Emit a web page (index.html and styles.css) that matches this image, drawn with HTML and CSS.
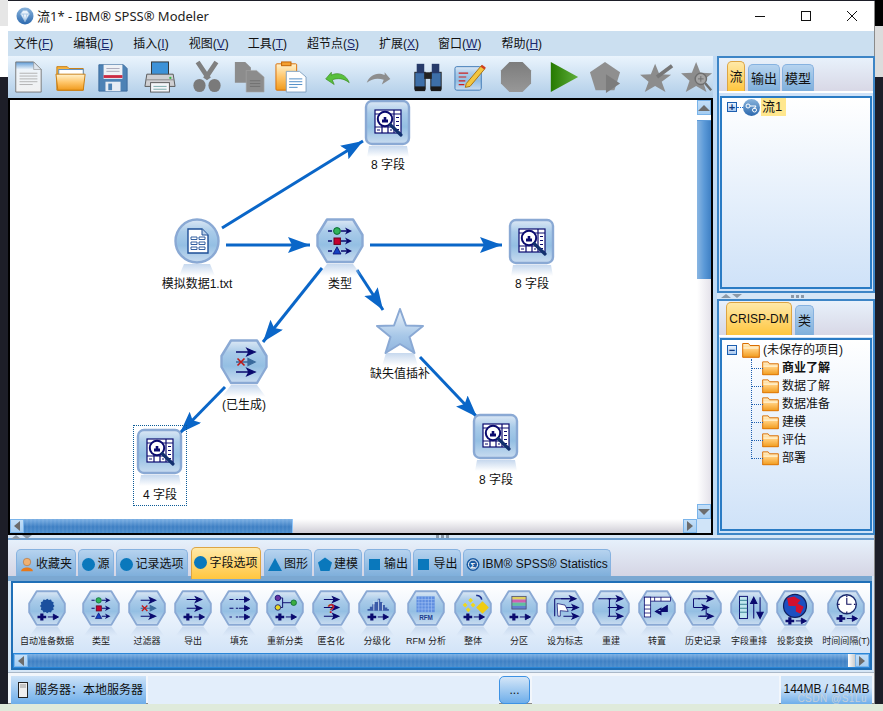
FILE: index.html
```html
<!DOCTYPE html>
<html lang="zh">
<head>
<meta charset="utf-8">
<title>IBM SPSS Modeler</title>
<link rel="stylesheet" href="styles.css">
</head>
<body>
<svg class="defs" aria-hidden="true">
  <defs>
    <linearGradient id="gBase" x1="0" y1="0" x2="0" y2="1"><stop offset="0" stop-color="#dce8f5"/><stop offset=".28" stop-color="#a9cbe9"/><stop offset=".6" stop-color="#94bfe3"/><stop offset="1" stop-color="#c9dcf0"/></linearGradient>
    <linearGradient id="gRefl" x1="0" y1="0" x2="0" y2="1"><stop offset="0" stop-color="#c6d8ee"/><stop offset="1" stop-color="#c6d8ee" stop-opacity="0"/></linearGradient>
    <linearGradient id="gStar" x1="0" y1="0" x2="0" y2="1"><stop offset="0" stop-color="#eef4fb"/><stop offset=".6" stop-color="#a8c8e8"/><stop offset="1" stop-color="#8fb4de"/></linearGradient>
    <linearGradient id="gFold" x1="0" y1="0" x2="0" y2="1"><stop offset="0" stop-color="#fff3cf"/><stop offset=".5" stop-color="#ffc66b"/><stop offset="1" stop-color="#f09a1c"/></linearGradient>
    <linearGradient id="gDoc" x1="0" y1="0" x2="0" y2="1"><stop offset="0" stop-color="#5d9ad6"/><stop offset=".25" stop-color="#eef4fa"/><stop offset="1" stop-color="#f1f1f1"/></linearGradient>
    <linearGradient id="gGray" x1="0" y1="0" x2="0" y2="1"><stop offset="0" stop-color="#7c7c7c"/><stop offset="1" stop-color="#989898"/></linearGradient>
    <linearGradient id="gPlay" x1="0" y1="0" x2="1" y2="0"><stop offset="0" stop-color="#267a00"/><stop offset="1" stop-color="#5fae3c"/></linearGradient>
    <linearGradient id="gBall" x1="0" y1="0" x2="0" y2="1"><stop offset="0" stop-color="#8ab4dc"/><stop offset="1" stop-color="#2a68ae"/></linearGradient>
    <marker id="head" markerUnits="userSpaceOnUse" markerWidth="24" markerHeight="18" refX="22" refY="8" orient="auto"><path d="M0 0L22 8L0 16L4 8Z" fill="#0a66c8"/></marker>

    <path id="ar" d="M0 0H17M11 -3.500L19 0L11 3.500L13 0Z" stroke="#0a0a6e" stroke-width="1.300" fill="#0a0a6e"/>
    <path id="ars" d="M0 0H11M7 -3.500L13.500 0L7 3.500Z" stroke="#0a0a6e" stroke-width="1.200" fill="#0a0a6e"/>
    <path id="pa" d="M0 -4.500H4V-1.600H7.500V1.600H4V4.500H0V1.600H-3.500V-1.600H0Z" fill="#0a0a6e"/>
    <g id="plusar"><use href="#pa" x="15.500" y="34"/><use href="#ars" x="25" y="34"/></g>

    <symbol id="b-hex" viewBox="0 0 48 58"><path d="M11 46H37L46 58H2Z" fill="url(#gRefl)"/><path d="M11 1.500H37L46.500 17V28L37 44H11L1.500 28V17Z" fill="url(#gBase)" stroke="#8aa9d4" stroke-width="2.400" stroke-linejoin="round"/></symbol>
    <symbol id="b-round" viewBox="0 0 48 58"><path d="M5 47H43L45 58H3Z" fill="url(#gRefl)"/><rect x="2" y="2" width="43" height="43" rx="6" fill="url(#gBase)" stroke="#8aa9d4" stroke-width="2.400"/></symbol>
    <symbol id="b-circle" viewBox="0 0 48 58"><path d="M11 46H37L42 58H6Z" fill="url(#gRefl)"/><circle cx="24" cy="23" r="21.500" fill="url(#gBase)" stroke="#8aa9d4" stroke-width="2.400"/></symbol>
    <symbol id="b-star" viewBox="0 0 48 58"><path d="M10 45H38L42 58H6Z" fill="url(#gRefl)"/><path d="M24 1L30 17.500L47 18L33.500 29L38.500 45L24 36L9.500 45L14.500 29L1 18L18 17.500Z" fill="url(#gStar)" stroke="#8aa9d4" stroke-width="2" stroke-linejoin="round"/></symbol>

    <symbol id="g-file" viewBox="0 0 48 58"><path d="M15 11H29L35 17V35H15Z" fill="#fff" stroke="#1e4f96" stroke-width="1.400"/><path d="M29 11V17H35" fill="#bcd2ea" stroke="#1e4f96"/><path d="M18 19h6v2.500h-6zM26 19h6v2.500h-6zM18 24h6v2.500h-6zM26 24h6v2.500h-6zM18 29h6v2.500h-6zM26 29h6v2.500h-6z" fill="none" stroke="#1e4f96" stroke-width=".9"/></symbol>
    <symbol id="g-type" viewBox="0 0 48 58"><path d="M12 13h4M12 23h4M12 33h4" stroke="#0a0a6e" stroke-width="1.300"/><circle cx="21" cy="13" r="3.400" fill="#2fb35a" stroke="#0a6a30"/><rect x="18" y="20" width="6.400" height="6.400" fill="#c4002f" stroke="#6a0020"/><path d="M21 28.800L25 36H17Z" fill="#1440c0" stroke="#0a0a6e" stroke-width=".8"/><path d="M25 13h8M25 23h8M25 33h8" stroke="#0a0a6e" stroke-width="1.300"/><path d="M29 9.500L36 13L29 16.500L31 13ZM29 19.500L36 23L29 26.500L31 23ZM29 29.500L36 33L29 36.500L31 33Z" fill="#0a0a6e"/></symbol>
    <symbol id="g-filter" viewBox="0 0 48 58"><use href="#ar" x="16" y="13"/><use href="#ar" x="16" y="33"/><path d="M16 23H33M28 19.500L35 23L28 26.500Z" stroke="#3a6a9c" stroke-width="1.300" fill="#3a6a9c"/><path d="M17.500 19.500L24.500 26.500M24.500 19.500L17.500 26.500" stroke="#c01818" stroke-width="1.600"/></symbol>
    <symbol id="g-table" viewBox="0 0 48 58"><rect x="11" y="11" width="26" height="23" fill="#fff" stroke="#0a0a6e" stroke-width="1.200"/><path d="M11 15H37M30 11V34M24 26V34M18 26V34M11 28H30" stroke="#0a0a6e" stroke-width="1.200"/><path d="M32 18.500h3M32 22.500h3M32 26.500h3M32 30.500h3M13 31h3M26 31h2" stroke="#0a0a6e"/><circle cx="21" cy="20" r="7.200" fill="#fff" stroke="#0a0a6e" stroke-width="2"/><path d="M18 23.500V20.500H19.700V18H22.300V20.500H24V23.500Z" fill="#0a0a6e"/><path d="M26 25.500L37 36" stroke="#12306e" stroke-width="3.200" stroke-linecap="round"/></symbol>

    <symbol id="p1" viewBox="0 0 48 58"><path transform="translate(8 5.500) scale(.68)" d="M24 8L27 10.500L31 9.500L32.500 13L36 14.500L35 18.500L37.500 21.500L35 24.500L36 28.500L32.500 30L31 33.500L27 32.500L24 35L21 32.500L17 33.500L15.500 30L12 28.500L13 24.500L10.500 21.500L13 18.500L12 14.500L15.500 13L17 9.500L21 10.500Z" fill="#1b4f9e"/><use href="#plusar"/></symbol>
    <symbol id="p4" viewBox="0 0 48 58"><use href="#ar" x="16" y="12"/><use href="#ar" x="16" y="23"/><use href="#plusar"/></symbol>
    <symbol id="p5" viewBox="0 0 48 58"><path d="M12 12h5M20 12h3M12 23h5M20 23h3M12 34h3M20 34h3" stroke="#0a0a6e" stroke-width="1.400"/><use href="#ars" x="24" y="12"/><use href="#ars" x="24" y="23"/><use href="#ars" x="24" y="34"/></symbol>
    <symbol id="p6" viewBox="0 0 48 58"><path d="M15 10H21V22H15M21 16H33" stroke="#0a0a6e" fill="none" stroke-width="1.200"/><circle cx="15" cy="10" r="3.500" fill="#6633a0" stroke="#0a0a6e"/><circle cx="15" cy="22" r="3.500" fill="#e8d820" stroke="#0a0a6e"/><circle cx="35" cy="16" r="3.500" fill="#3cac40" stroke="#0a6a30"/><use href="#plusar"/></symbol>
    <symbol id="p7" viewBox="0 0 48 58"><use href="#ar" x="15" y="12"/><use href="#ar" x="15" y="22"/><use href="#ar" x="15" y="33"/><text x="24" y="29" class="qm">?</text></symbol>
    <symbol id="p8" viewBox="0 0 48 58"><path d="M10 26h2v-2h3v-3h3v-3h3v-3h4v-4h3v4h3v4h3v3h3v2h2v2H10Z" fill="#3a5aa8"/><path d="M20 14v12M26 12v14M31 16v10" stroke="#dce8f5"/><use href="#plusar"/></symbol>
    <symbol id="p9" viewBox="0 0 48 58"><rect x="12" y="8" width="23" height="20" fill="#5f8ee0"/><path d="M15 8v20M19 8v20M23 8v20M27 8v20M31 8v20M12 12h23M12 16h23M12 20h23M12 24h23" stroke="#a7c6f5" stroke-width=".7"/><text x="24" y="38" class="rfm">RFM</text></symbol>
    <symbol id="p10" viewBox="0 0 48 58"><path d="M18 13l3-3 3 3-3 3zM11 19l3-3 3 3-3 3zM21 19l3-3 3 3-3 3zM15 25l3-3 3 3-3 3z" fill="#f0d818"/><path d="M36 14l8 8-8 8-8-8z" fill="#f0cc10"/><path d="M28 7a6 6 0 0 1 7 5" stroke="#1b2f8e" stroke-width="2" fill="none"/><use href="#plusar"/></symbol>
    <symbol id="p11" viewBox="0 0 48 58"><rect x="15" y="8" width="18" height="4" fill="#e0d060"/><rect x="15" y="12" width="18" height="4" fill="#d060b0"/><rect x="15" y="16" width="18" height="4" fill="#60c0a0"/><rect x="15" y="20" width="18" height="4" fill="#6080d0"/><rect x="15" y="8" width="18" height="16" fill="none" stroke="#4a4a70"/><use href="#plusar"/></symbol>
    <symbol id="p12" viewBox="0 0 48 58"><path d="M11 11H30M11 11V33" stroke="#0a0a6e" stroke-width="1.300"/><use href="#ar" x="19" y="11"/><use href="#ar" x="22" y="22"/><use href="#ar" x="22" y="33"/><path d="M14 17L24 19L28 27L18 26V33H15Z" fill="#fff" stroke="#0a0a6e" stroke-width=".9"/></symbol>
    <symbol id="p13" viewBox="0 0 48 58"><path d="M8 11H24M22 11V33" stroke="#0a0a6e" stroke-width="1.300"/><use href="#ar" x="20" y="11"/><use href="#ar" x="20" y="22"/><use href="#ar" x="20" y="33"/></symbol>
    <symbol id="p14" viewBox="0 0 48 58"><rect x="8" y="9" width="33" height="5" fill="#fff" stroke="#0a0a6e"/><rect x="8" y="9" width="8" height="25" fill="#fff" stroke="#0a0a6e"/><path d="M21 9v5M29 9v5M8 19h8M8 24h8M8 29h8" stroke="#0a0a6e"/><path d="M37 19V27H24M29 23L22 27L29 31Z" stroke="#0a0a6e" stroke-width="1.300" fill="#0a0a6e"/></symbol>
    <symbol id="p15" viewBox="0 0 48 58"><use href="#ar" x="18" y="11"/><use href="#ar" x="12" y="22"/><use href="#ar" x="18" y="33"/><path d="M12 11H20M12 11V22M28 22V33H20" stroke="#0a0a6e" fill="none" stroke-width="1.200"/></symbol>
    <symbol id="p16" viewBox="0 0 48 58"><rect x="12" y="8" width="10" height="28" fill="#bfe6ee" stroke="#0a0a6e" stroke-width="1.200"/><path d="M12 13h10M12 18h10M12 23h10M12 28h10" stroke="#1a6a80"/><path d="M30 36V12M26 17L30 9L34 17ZM38 9V33M34 28L38 36L42 28Z" stroke="#0a0a6e" fill="#0a0a6e" stroke-width="1.300"/></symbol>
    <symbol id="p17" viewBox="0 0 48 58"><circle cx="24" cy="20" r="14.500" fill="#1c4fc0" stroke="#10205e" stroke-width="1.500"/><path d="M14 10L23 8L31 13L27 17L35 21L31 30L25 27L25 20L16 20Z" fill="#d01030"/><use href="#plusar" y="5"/></symbol>
    <symbol id="p18" viewBox="0 0 48 58"><circle cx="25" cy="18" r="12" fill="#fff" stroke="#1a2a6e" stroke-width="1.800"/><path d="M25 10v8h6" stroke="#10105e" stroke-width="1.400" fill="none"/><path d="M25 7v2M25 27v2M14 18h2M34 18h2" stroke="#10105e" stroke-width="1.500"/><use href="#plusar" y="2"/></symbol>

    <symbol id="folder" viewBox="0 0 18 16"><path d="M.7 15.300V1.500H6.500L8 3.500H17.300V15.300Z" fill="url(#gFold)" stroke="#d96c00"/><path d="M1.500 6H16.500" stroke="#fff4d8" stroke-width="1.200"/></symbol>
  </defs>
</svg>

<div class="win">
  <header class="title">
    <svg class="appicon" viewBox="0 0 18 18"><circle cx="9" cy="9" r="8.500" fill="url(#gBall)"/><path d="M4.500 7L7 3.500H11L13.500 7L9 14.500Z" fill="#eaf3fb" stroke="#a5c5e2" stroke-width=".6"/><path d="M4.500 7H13.500M7 7L9 14.500L11 7" stroke="#8ab4dc" fill="none" stroke-width=".6"/></svg>
    <span class="title-text">流1* - IBM® SPSS® Modeler</span>
    <div class="winctl">
      <svg viewBox="0 0 12 12"><path d="M1 6.500H11" stroke="#111" fill="none"/></svg>
      <svg viewBox="0 0 12 12"><rect x="1.500" y="1.500" width="9" height="9" stroke="#111" fill="none"/></svg>
      <svg viewBox="0 0 12 12"><path d="M1 1L11 11M11 1L1 11" stroke="#111" fill="none"/></svg>
    </div>
  </header>

  <nav class="menu">
    <span>文件(<u>F</u>)</span><span>编辑(<u>E</u>)</span><span>插入(<u>I</u>)</span><span>视图(<u>V</u>)</span><span>工具(<u>T</u>)</span><span>超节点(<u>S</u>)</span><span>扩展(<u>X</u>)</span><span>窗口(<u>W</u>)</span><span>帮助(<u>H</u>)</span>
  </nav>

  <div class="upper">
    <div class="leftcol">
      <div class="toolbar">
        <svg viewBox="0 0 34 34"><path d="M4 1H23L31 9V33H4Z" fill="url(#gDoc)" stroke="#777"/><path d="M23 1V9H31Z" fill="#dfe6ee" stroke="#888" stroke-width=".6"/><path d="M8 13H27M8 16H27M8 19H27M8 22H27M8 25H22" stroke="#b0b0b0"/></svg>
        <svg class="g9" viewBox="0 0 34 34"><path d="M2 31V6H13L15 8H30V31Z" fill="#f6b23c" stroke="#c87c10"/><rect x="4" y="9" width="26" height="10" fill="#fff" stroke="#5b8fc4"/><path d="M1 14H32L30 31H3Z" fill="url(#gFold)" stroke="#c87c10"/></svg>
        <svg class="g8" viewBox="0 0 34 34"><path d="M2 4H28L32 8V32H2Z" fill="#4d82b5" stroke="#3a6a9c"/><rect x="7" y="4" width="20" height="15" fill="#eef1f6"/><path d="M10 8H24M10 11H24" stroke="#a8a8b8"/><rect x="7" y="15" width="20" height="3" fill="#cc2a42"/><rect x="9" y="22" width="16" height="10" fill="#e8edf4"/><rect x="12" y="24" width="4" height="7" fill="#4d82b5"/></svg>
        <svg class="g13" viewBox="0 0 34 34"><rect x="8" y="1" width="18" height="14" fill="#3d92d8" stroke="#333"/><path d="M3 14H31L33 27H1Z" fill="#cfcfd2" stroke="#555"/><path d="M2 20H32" stroke="#888"/><rect x="7" y="23" width="20" height="10" fill="#f4f6f9" stroke="#555"/><path d="M10 27H24M10 30H24" stroke="#7aa"/><circle cx="28" cy="18" r="1.200" fill="#3cb44a"/></svg>
        <svg class="g13" viewBox="0 0 34 34"><path d="M7 1L19 19M27 1L15 19" stroke="#808080" stroke-width="5"/><ellipse cx="9" cy="26" rx="6.500" ry="7" fill="#7a7a7a"/><ellipse cx="25" cy="26" rx="6.500" ry="7" fill="#7a7a7a"/></svg>
        <svg class="g8" viewBox="0 0 34 34"><path d="M2 1H13L19 7V23H2Z" fill="#8c8c8c"/><path d="M14 10H25L33 17V33H14Z" fill="#8c8c8c" stroke="#a8a8a8" stroke-width=".6"/><path d="M18 21H29M18 24H29M18 27H29" stroke="#707070"/></svg>
        <svg class="g8" viewBox="0 0 34 34"><rect x="1" y="3" width="22" height="28" rx="1" fill="url(#gFold)" stroke="#d96c00"/><rect x="7" y="1" width="10" height="4" fill="#f4a030" stroke="#c06000"/><path d="M12 11H26L33 17V33H12Z" fill="#fff" stroke="#7fa0c0"/><path d="M15 19H29M15 22H29M15 25H29M15 28H24" stroke="#4a8ac4"/></svg>
        <svg class="g12" viewBox="0 0 34 34"><path d="M5 19L11 12V15C19 11 27 15 30 23C24 18 17 18 12 20L14 25Z" fill="#58c03c" stroke="#3a8a20" stroke-width=".7"/></svg>
        <svg class="g8" viewBox="0 0 34 34"><path transform="matrix(-1 0 0 1 34 0)" d="M5 19L11 12V15C19 11 27 15 30 23C24 18 17 18 12 20L14 25Z" fill="#8e8e8e"/></svg>
        <svg class="g15" viewBox="0 0 34 34"><rect x="3" y="12" width="11" height="18" fill="#3d6fa8" stroke="#222"/><rect x="20" y="12" width="11" height="18" fill="#3d6fa8" stroke="#222"/><rect x="5" y="3" width="8" height="10" fill="#263a6a"/><rect x="21" y="3" width="8" height="10" fill="#263a6a"/><rect x="13" y="12" width="8" height="7" fill="#222"/><rect x="3" y="27" width="11" height="5" fill="#1a1a1a"/><rect x="20" y="27" width="11" height="5" fill="#1a1a1a"/></svg>
        <svg class="g8" viewBox="0 0 34 34"><rect x="1" y="6" width="28" height="25" rx="2" fill="url(#gBase)" stroke="#3d78b4"/><path d="M5 13H15M5 17H13M5 21H12M5 25H11" stroke="#cc2020" stroke-width="1.300"/><path d="M13 24L29 5L33 8L17 27L12 28Z" fill="#f2c640" stroke="#a87010"/><path d="M29 5L33 8" stroke="#d04020" stroke-width="2.500"/></svg>
        <svg class="g12" viewBox="0 0 34 34"><path d="M10 1H24L33 10V24L24 33H10L1 24V10Z" fill="url(#gGray)"/></svg>
        <svg class="g14" viewBox="0 0 34 34"><path d="M3 1L32 17L3 33Z" fill="url(#gPlay)"/></svg>
        <svg class="g7" viewBox="0 0 34 34"><path d="M17 1L33 12L27 31H7L1 12Z" fill="#8f8f8f"/><path d="M18 14L33 24L18 34Z" fill="#7c7c7c"/></svg>
        <svg class="g18" viewBox="0 0 34 34"><path d="M15 3L19.500 14L32 14.500L22 22L26 33L15 26.500L4 33L8 22L-1 14.500L10.500 14Z" fill="#8c8c8c"/><path d="M17 17L33 5" stroke="#777" stroke-width="4"/></svg>
        <svg class="g7" viewBox="0 0 34 34"><path d="M15 1L19.500 12.500L32 13L22 21L26 33L15 26.500L4 33L8 21L-1 13L10.500 12.500Z" fill="#8c8c8c"/><circle cx="20" cy="19" r="6" fill="#a4a4a4" stroke="#6e6e6e" stroke-width="1.500"/><path d="M17 19H23M20 16V22" stroke="#6e6e6e"/><path d="M24.500 23.500L31 31" stroke="#6e6e6e" stroke-width="2.500"/></svg>
      </div>

      <div class="frame">
        <div class="canvas">
          <svg class="edges" viewBox="0 0 687 419" width="687" height="419">
            <path marker-end="url(#head)" d="M212 128L353 41"/>
            <path marker-end="url(#head)" d="M216 145H300"/>
            <path marker-end="url(#head)" d="M360 145H492"/>
            <path marker-end="url(#head)" d="M312 168L253 242"/>
            <path marker-end="url(#head)" d="M347 170L373 210"/>
            <path marker-end="url(#head)" d="M410 257L467 317"/>
            <path marker-end="url(#head)" d="M215 287L170 333"/>
          </svg>
          <div class="node n1"><svg viewBox="0 0 48 58"><use href="#b-round"/><use href="#g-table"/></svg><span>8 字段</span></div>
          <div class="node n2"><svg viewBox="0 0 48 58"><use href="#b-circle"/><use href="#g-file"/></svg><span>模拟数据1.txt</span></div>
          <div class="node n3"><svg viewBox="0 0 48 58"><use href="#b-hex"/><use href="#g-type"/></svg><span>类型</span></div>
          <div class="node n4"><svg viewBox="0 0 48 58"><use href="#b-round"/><use href="#g-table"/></svg><span>8 字段</span></div>
          <div class="node n5"><svg viewBox="0 0 48 58"><use href="#b-star"/></svg><span>缺失值插补</span></div>
          <div class="node n6"><svg viewBox="0 0 48 58"><use href="#b-hex"/><use href="#g-filter"/></svg><span>(已生成)</span></div>
          <div class="node n7"><svg viewBox="0 0 48 58"><use href="#b-round"/><use href="#g-table"/></svg><span>4 字段</span></div>
          <div class="node n8"><svg viewBox="0 0 48 58"><use href="#b-round"/><use href="#g-table"/></svg><span>8 字段</span></div>
        </div>
        <div class="vbar">
          <div class="sbtn"><i class="tri up"></i></div>
          <div class="vthumb"></div>
          <div class="vtrack"></div>
          <div class="sbtn"><i class="tri down"></i></div>
        </div>
        <div class="hbar">
          <div class="sbtn"><i class="tri left"></i></div>
          <div class="hthumb big"></div>
          <div class="htrack"></div>
          <div class="sbtn"><i class="tri right"></i></div>
        </div>
        <div class="corner"></div>
      </div>
    </div>

    <aside class="rightcol">
      <section class="panel p-top">
        <div class="ptabs">
          <span class="ptab on t-liu">流</span><span class="ptab">输出</span><span class="ptab">模型</span>
        </div>
        <div class="treebox">
          <div class="troot">
            <i class="tbox">+</i><i class="tdots"></i>
            <svg class="ball" viewBox="0 0 17 17"><circle cx="8.500" cy="8.500" r="8.500" fill="url(#gBall)"/><circle cx="5" cy="7" r="2" fill="none" stroke="#fff"/><path d="M7 7H13L11 10" stroke="#fff" fill="none"/><circle cx="11.500" cy="11" r="2" fill="none" stroke="#fff"/></svg>
            <span class="hl">流1</span>
          </div>
        </div>
      </section>
      <div class="hsplit"><i class="tri up small"></i><i class="tri down small"></i><b class="dots"></b></div>
      <section class="panel p-bot">
        <div class="ptabs tall">
          <span class="ptab on t-crisp">CRISP-DM</span><span class="ptab t-lei">类</span>
        </div>
        <div class="treebox">
          <div class="troot">
            <i class="tbox">−</i><i class="tgap"></i>
            <svg class="fold" viewBox="0 0 18 16"><use href="#folder"/></svg>
            <span>(未保存的项目)</span>
          </div>
          <ul class="tree">
            <li><svg class="fold" viewBox="0 0 18 16"><use href="#folder"/></svg><b>商业了解</b></li>
            <li><svg class="fold" viewBox="0 0 18 16"><use href="#folder"/></svg>数据了解</li>
            <li><svg class="fold" viewBox="0 0 18 16"><use href="#folder"/></svg>数据准备</li>
            <li><svg class="fold" viewBox="0 0 18 16"><use href="#folder"/></svg>建模</li>
            <li><svg class="fold" viewBox="0 0 18 16"><use href="#folder"/></svg>评估</li>
            <li><svg class="fold" viewBox="0 0 18 16"><use href="#folder"/></svg>部署</li>
          </ul>
        </div>
      </section>
    </aside>
  </div>

  <section class="palette">
    <div class="psplit"><i class="tri up small"></i><i class="tri down small"></i><b class="dots"></b></div>
    <div class="tabs">
      <span class="tab w60"><svg viewBox="0 0 16 18"><circle cx="8" cy="6" r="4.500" fill="#f0b070" stroke="#a06030" stroke-width=".6"/><path d="M1 17C1 11 15 11 15 17Z" fill="#e87818"/></svg>收藏夹</span>
      <span class="tab w36"><i class="s-c"></i>源</span>
      <span class="tab w72"><i class="s-c"></i>记录选项</span>
      <span class="tab on w70"><i class="s-c"></i>字段选项</span>
      <span class="tab w48"><i class="s-t"></i>图形</span>
      <span class="tab w48"><svg viewBox="0 0 14 14"><path d="M7 0L14 5L11.500 13.500H2.500L0 5Z" fill="#0a78bc"/></svg>建模</span>
      <span class="tab w47"><i class="s-s"></i>输出</span>
      <span class="tab w48"><i class="s-s"></i>导出</span>
      <span class="tab w148"><svg viewBox="0 0 14 14"><circle cx="7" cy="7" r="6.500" fill="#1c5aa0"/><circle cx="7" cy="7" r="4.500" fill="none" stroke="#fff"/><text x="7" y="10" class="sig">Σ</text></svg>IBM® SPSS® Statistics</span>
    </div>
    <div class="strip"></div>
    <div class="pbox">
      <div class="items">
        <div class="item"><svg viewBox="0 0 48 58"><use href="#b-hex"/><use href="#p1"/></svg><span>自动准备数据</span></div>
        <div class="item m8"><svg viewBox="0 0 48 58"><use href="#b-hex"/><use href="#g-type"/></svg><span>类型</span></div>
        <div class="item"><svg viewBox="0 0 48 58"><use href="#b-hex"/><use href="#g-filter"/></svg><span>过滤器</span></div>
        <div class="item"><svg viewBox="0 0 48 58"><use href="#b-hex"/><use href="#p4"/></svg><span>导出</span></div>
        <div class="item"><svg viewBox="0 0 48 58"><use href="#b-hex"/><use href="#p5"/></svg><span>填充</span></div>
        <div class="item"><svg viewBox="0 0 48 58"><use href="#b-hex"/><use href="#p6"/></svg><span>重新分类</span></div>
        <div class="item"><svg viewBox="0 0 48 58"><use href="#b-hex"/><use href="#p7"/></svg><span>匿名化</span></div>
        <div class="item"><svg viewBox="0 0 48 58"><use href="#b-hex"/><use href="#p8"/></svg><span>分级化</span></div>
        <div class="item m3"><svg viewBox="0 0 48 58"><use href="#b-hex"/><use href="#p9"/></svg><span>RFM 分析</span></div>
        <div class="item m1"><svg viewBox="0 0 48 58"><use href="#b-hex"/><use href="#p10"/></svg><span>整体</span></div>
        <div class="item"><svg viewBox="0 0 48 58"><use href="#b-hex"/><use href="#p11"/></svg><span>分区</span></div>
        <div class="item"><svg viewBox="0 0 48 58"><use href="#b-hex"/><use href="#p12"/></svg><span>设为标志</span></div>
        <div class="item"><svg viewBox="0 0 48 58"><use href="#b-hex"/><use href="#p13"/></svg><span>重建</span></div>
        <div class="item"><svg viewBox="0 0 48 58"><use href="#b-hex"/><use href="#p14"/></svg><span>转置</span></div>
        <div class="item"><svg viewBox="0 0 48 58"><use href="#b-hex"/><use href="#p15"/></svg><span>历史记录</span></div>
        <div class="item"><svg viewBox="0 0 48 58"><use href="#b-hex"/><use href="#p16"/></svg><span>字段重排</span></div>
        <div class="item"><svg viewBox="0 0 48 58"><use href="#b-hex"/><use href="#p17"/></svg><span>投影变换</span></div>
        <div class="item m5"><svg viewBox="0 0 48 58"><use href="#b-hex"/><use href="#p18"/></svg><span>时间间隔(T)</span></div>
      </div>
      <div class="hbar pbar">
        <div class="sbtn"><i class="tri left"></i></div>
        <div class="hthumb"></div>
        <div class="stub"></div>
        <div class="sbtn"><i class="tri right"></i></div>
      </div>
    </div>
  </section>

  <footer class="status">
    <div class="cell srv"><svg viewBox="0 0 10 16"><rect x=".5" y=".5" width="9" height="15" fill="#eee" stroke="#222"/><path d="M2 3H8M2 5H8" stroke="#999"/></svg>服务器：本地服务器</div>
    <div class="cell c-wide"></div>
    <div class="cell more">...</div>
    <div class="cell c-wide2"></div>
    <div class="cell mem">144MB / 164MB</div>
  </footer>
  <span class="mark">CSDN @S1Lu</span>
</div>
</body>
</html>
```

FILE: styles.css
```css
* { box-sizing: border-box; }
html, body { margin: 0; padding: 0; }
body {
  width: 883px;
  height: 711px;
  overflow: hidden;
  position: relative;
  padding: 1px 0 0 8px;
  font: 12px/15px "Liberation Sans", "Noto Sans CJK SC", sans-serif;
  color: #111;
  background:
    linear-gradient(#dfeadb, #dfeadb) 0 100% / 100% 7px no-repeat,
    linear-gradient(#fff, #fff) 0 26px / 8px 51px no-repeat,
    linear-gradient(#e6e6e6, #e6e6e6) 0 0 / 8px 26px no-repeat,
    linear-gradient(#000, #000) 100% 0 / 8px 26px no-repeat,
    linear-gradient(#dcdcdc, #dcdcdc) 100% 26px / 8px 51px no-repeat,
    #1d1e28;
}
.defs { position: absolute; width: 0; height: 0; }
i { display: block; font-style: normal; }

.win {
  position: relative;
  width: 867px;
  height: 703px;
  display: flex;
  flex-direction: column;
  background: #d6e6f6;
  border-right: 1px solid #8a8a8a;
  border-bottom: 1px solid #8a8a8a;
}

/* title */
.title { height: 30px; background: #fff; display: flex; align-items: center; padding-left: 8px; flex: none; }
.appicon { width: 18px; height: 18px; margin-right: 3px; }
.title-text { font: 13px/16px "Noto Sans", "Noto Sans CJK SC", sans-serif; color: #222; }
.winctl { margin-left: auto; display: flex; gap: 34px; padding-right: 16px; }
.winctl svg { width: 12px; height: 12px; }

/* menu */
.menu { height: 25px; flex: none; background: #cbdff0; display: flex; align-items: center; padding: 1px 0 0 6px; gap: 20px; font-size: 12px; }
.menu span:nth-child(4), .menu span:nth-child(7) { margin-right: -1px; }
.menu u { color: #1a2a6e; }

/* upper */
.upper { height: 479px; flex: none; display: flex; }
.leftcol { width: 705px; flex: none; display: flex; flex-direction: column; }
.toolbar { height: 42px; flex: none; display: flex; align-items: center; padding-left: 3px; background: linear-gradient(#eaf4fd, #b0cde8); }
.toolbar svg { width: 34px; height: 32px; flex: none; overflow: visible; }
.g7 { margin-left: 7px; }
.g8 { margin-left: 8px; }
.g9 { margin-left: 9px; }
.g12 { margin-left: 12px; }
.g13 { margin-left: 13px; }
.g14 { margin-left: 14px; }
.g15 { margin-left: 15px; }
.g18 { margin-left: 18px; }

.frame { flex: 1; border: 2px solid #000; display: grid; grid-template-columns: 1fr 14px; grid-template-rows: 1fr 14px; min-height: 0; }
.canvas { position: relative; overflow: hidden; background: #fff; }
.edges { position: absolute; left: 0; top: 0; }
.edges path { stroke: #0a66c8; stroke-width: 3; fill: none; }

.node { position: absolute; width: 48px; display: flex; flex-direction: column; align-items: center; }
.node svg { width: 48px; height: 58px; display: block; flex: none; }
.node span { white-space: nowrap; line-height: 15px; margin-top: 1px; }
.n1 { left: 354px; top: -1px; }
.n2 { left: 163px; top: 118px; }
.n3 { left: 306px; top: 118px; }
.n4 { left: 498px; top: 118px; }
.n5 { left: 366px; top: 208px; }
.n6 { left: 210px; top: 239px; }
.n7 { left: 126px; top: 328px; outline: 1px dotted #0a5a96; outline-offset: 2px; }
.n7 span { margin-top: 2px; }
.n8 { left: 462px; top: 313px; }
.n8 span { margin-top: 2px; }

/* scrollbars */
.sbtn { background: linear-gradient(#c4dff8, #a5cdf2); display: flex; align-items: center; justify-content: center; flex: none; width: 14px; height: 14px; border: 1px solid #7ab4ea; }
.tri { width: 0; height: 0; border: 0 solid transparent; }
.tri.up { border-width: 0 6px 6px; border-bottom-color: #6c6c6c; }
.tri.down { border-width: 6px 6px 0; border-top-color: #6c6c6c; }
.tri.left { border-width: 5px 6px 5px 0; border-right-color: #6c6c6c; }
.tri.right { border-width: 5px 0 5px 6px; border-left-color: #6c6c6c; }
.tri.small.up { border-width: 0 5px 4px; border-bottom-color: #8c9aa8; }
.tri.small.down { border-width: 4px 5px 0; border-top-color: #8c9aa8; }
.vbar { display: flex; flex-direction: column; background: #fff; }
.vbar .sbtn { height: 15px; }
.vthumb { height: 159px; margin-top: 5px; background: linear-gradient(90deg, #8ab6e2, #5c9ad8 50%, #3f80c4); flex: none; border-top: 1px solid #5c9ad8; }
.vtrack { flex: 1; background: linear-gradient(90deg, #fff, #e4e2ea); }
.hbar { display: flex; }
.hthumb { flex: 1; background: repeating-linear-gradient(90deg, transparent 0 2px, rgba(255,255,255,.05) 2px 4px), linear-gradient(#7cb0e4, #3f80c4 55%, #4a8ccc); }
.hthumb.big { flex: none; width: 269px; border-right: 1px solid #8fc4f8; }
.htrack { flex: 1; background: linear-gradient(#fff, #cfcdd6); }
.corner { background: #d0e4f8; }

/* right panels */
.rightcol { width: 162px; flex: none; padding-left: 4px; display: flex; flex-direction: column; background: #c2dcf5; }
.panel { border: 2px solid #3d85c6; background: #cfe2f8; display: flex; flex-direction: column; padding-bottom: 2px; }
.p-top { height: 237px; flex: none; }
.p-bot { flex: 1; min-height: 0; }
.ptabs { height: 35px; flex: none; display: flex; align-items: flex-end; gap: 2px; padding-left: 8px; background: linear-gradient(#e8f1fb, #d8d8e6); border-bottom: 2px solid #fff; }
.ptabs.tall { height: 36px; padding-left: 7px; gap: 3px; }
.ptab { height: 27px; display: flex; align-items: center; justify-content: center; width: 32px; font-size: 13px; white-space: nowrap; border: 1px solid #86b2e0; border-bottom: 0; border-radius: 5px 5px 0 0; background: linear-gradient(#b6d3ef, #7fafdb); }
.ptab.on { background: linear-gradient(#ffe9a8, #ffc63f); border-color: #dda544; }
.t-liu { width: 18px; height: 30px; margin-right: 1px; }
.t-crisp { width: 66px; height: 33px; font-size: 12px; }
.t-lei { width: 19px; height: 30px; }
.treebox { flex: 1; margin: 1px 1px 0; border: 2px solid #2a7bc4; background: linear-gradient(#fff, #cfe2f8); padding: 1px 0 0 5px; min-height: 0; }
.p-top .treebox { margin-top: 3px; padding-top: 0; }
.troot { display: flex; align-items: center; height: 18px; }
.tbox { width: 10px; height: 10px; border: 1px solid #1d5fb0; background: linear-gradient(#eaf3fd, #a9c9ef); font: bold 11px/8px "Liberation Sans", sans-serif; text-align: center; color: #103a80; flex: none; }
.tdots { width: 6px; border-top: 1px dotted #1d6fd0; flex: none; }
.tgap { width: 5px; flex: none; }
.ball { width: 17px; height: 17px; flex: none; margin-right: 1px; }
.hl { background: #ffe78e; height: 18px; line-height: 18px; padding: 0 1px; width: 25px; font-size: 13px; }
.fold { width: 18px; height: 16px; flex: none; margin-right: 3px; }
.tree { list-style: none; margin: 0; padding: 0 0 0 35px; }
.tree li { height: 18px; display: flex; align-items: center; position: relative; }
.tree li::before { content: ""; position: absolute; left: -11px; top: -9px; width: 11px; height: 18px; border-left: 1px dotted #1d5fb0; border-bottom: 1px dotted #1d5fb0; }
.tree li:first-child::before { top: 0; height: 9px; }
.tree .fold { width: 17px; }
.tree b { font-weight: bold; }
.hsplit { height: 6px; flex: none; display: flex; align-items: center; gap: 1px; padding-left: 4px; background: #d6e6f6; position: relative; }
.dots { position: absolute; left: 74px; top: 2px; width: 14px; height: 3px; background: repeating-linear-gradient(90deg, #8a98a8 0 3px, transparent 3px 5px); }

/* palette */
.palette { height: 137px; flex: none; display: flex; flex-direction: column; background: #d6e6f6; }
.psplit { height: 5px; flex: none; display: flex; align-items: center; gap: 1px; padding-left: 3px; border-bottom: 2px solid #6f9fcf; position: relative; }
.psplit .dots { left: 428px; top: 0; }
.tabs { height: 36px; flex: none; display: flex; align-items: flex-end; gap: 2px; padding-left: 8px; background: linear-gradient(#e6f0fb, #d5d5e4); }
.tab { height: 27px; padding-top: 3px; display: flex; align-items: center; justify-content: center; gap: 2px; border: 1px solid #86b2e0; border-bottom: 0; border-radius: 5px 5px 0 0; background: linear-gradient(#b6d3ef, #7fafdb); white-space: nowrap; overflow: hidden; position: relative; }
.tab svg { width: 14px; height: 15px; flex: none; }
.tab.on { height: 32px; margin-bottom: -3px; align-items: flex-start; padding-top: 8px; background: linear-gradient(#ffe9a8, #ffc63f); border-color: #dda544; }
.w60 { width: 60px; } .w36 { width: 36px; } .w72 { width: 72px; } .w70 { width: 70px; margin: 0 1px; }
.w48 { width: 48px; } .w47 { width: 47px; } .w148 { width: 148px; }
.s-c { width: 13px; height: 13px; border-radius: 50%; background: #0a78bc; flex: none; }
.s-t { width: 0; height: 0; border: solid transparent; border-width: 0 7px 13px; border-bottom-color: #0a78bc; flex: none; }
.s-s { width: 11px; height: 11px; background: #0a78bc; flex: none; margin: 0 2px; }
.sig { font: bold 8px "Liberation Sans", sans-serif; fill: #fff; text-anchor: middle; }
.strip { height: 5px; flex: none; background: #7ba8d2; margin: 0 2px 0 0; }
.pbox { margin: 0 2px 0 3px; height: 89px; flex: none; border: 2px solid #1f6fb7; background: linear-gradient(#fff, #c9def6); display: flex; flex-direction: column; }
.items { flex: 1; display: flex; padding: 7px 0 0 11px; min-height: 0; }
.item { width: 46px; flex: none; display: flex; flex-direction: column; align-items: center; }
.item svg { width: 38px; height: 46px; display: block; flex: none; overflow: hidden; }
.item span { white-space: nowrap; font-size: 9px; line-height: 12px; margin-top: -1px; color: #222; }
.m8 { margin-left: 8px; } .m3 { margin-left: 3px; } .m1 { margin-left: 1px; } .m5 { margin-left: 5px; }
.pbar { height: 15px; flex: none; border: 1px solid #2a86d8; }
.pbar .sbtn { height: 13px; }
.stub { width: 7px; flex: none; background: linear-gradient(90deg, #fff, #ccc); }
.qm { font: bold 15px "Liberation Sans", sans-serif; fill: #c02020; text-anchor: middle; }
.rfm { font: bold 8px "Liberation Sans", sans-serif; fill: #1b3a8e; text-anchor: middle; }

/* status */
.status { flex: 1; display: flex; gap: 2px; padding: 3px 2px 1px 3px; background: #f2f6fb; border-top: 1px solid #aab8c8; min-height: 0; }
.cell { height: 28px; background: #e3eefb; display: flex; align-items: center; font-size: 12px; }
.srv { width: 135px; background: linear-gradient(#cce2f8, #6eaeea); gap: 7px; padding-left: 7px; flex: none; font-size: 12px; }
.srv svg { width: 10px; height: 16px; flex: none; }
.c-wide { width: 351px; flex: none; margin-right: -2px; }
.more { width: 31px; flex: none; justify-content: center; border-radius: 5px; border: 1px solid #3d92e4; background: linear-gradient(#d4e6f8, #6eaeea); }
.c-wide2 { flex: 1; }
.mem { width: 91px; flex: none; justify-content: center; line-height: 12px; padding-bottom: 2px; background: linear-gradient(#cce2f8 40%, #6eaeea); }
.mark { position: absolute; right: 7px; bottom: -1px; font-size: 10px; line-height: 10px; color: #c4cfda; letter-spacing: .5px; }
```
